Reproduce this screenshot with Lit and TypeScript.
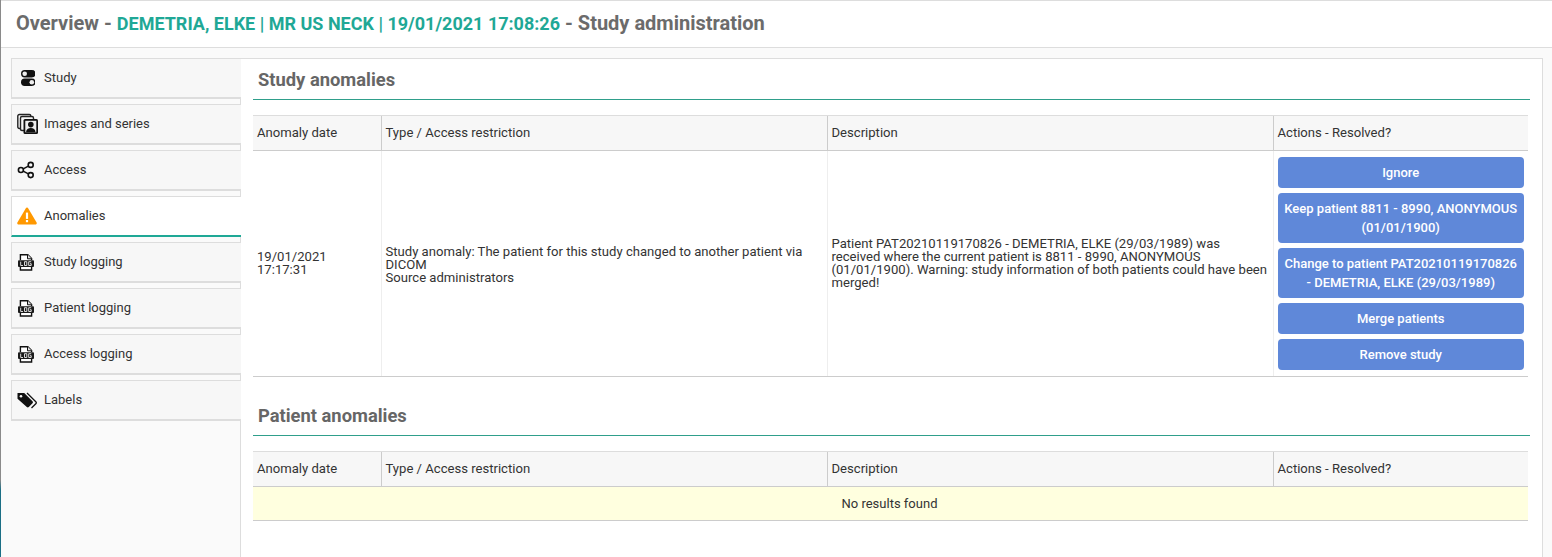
import { LitElement, html, css, svg } from "lit";
import { customElement } from "lit/decorators.js";

const logIcon = svg`<svg viewBox="0 0 16 18" width="16" height="18"><path d="M2.400 7V1.700h7.400l3.800 3.800V7 M2.400 14v3h11.200v-3" fill="#fff" stroke="#111" stroke-width="1.400"/><path d="M9.500 1.500v4.300h4.300" fill="#ddd" stroke="#111" stroke-width="1"/><rect x="0" y="7.200" width="16" height="6.800" rx="1" fill="#1a1a1a"/><path d="M2.700 8.700v3.800h2.300 M6.500 8.700h2.300v3.800H6.500z M13.200 8.700h-2.500v3.800h2.500v-1.800h-1.200" fill="none" stroke="#eee" stroke-width=".9"/></svg>`;

const icons: Record<string, unknown> = {
  study: svg`<svg viewBox="0 0 18 18" width="18" height="18"><rect x="4" y="1" width="14.500" height="7.400" rx="3.700" fill="#111"/><circle cx="7.700" cy="4.700" r="2.300" fill="#eee"/><rect x="4" y="9.600" width="14.500" height="7.400" rx="3.700" fill="#111"/><circle cx="14.800" cy="13.300" r="2.300" fill="#eee"/></svg>`,
  images: svg`<svg viewBox="0 0 22 22" width="22" height="22"><rect x=".8" y="1.500" width="13" height="14" rx="1.500" fill="#f7f7f7" stroke="#222" stroke-width="1.400"/><rect x="3.500" y="3.500" width="13" height="14" rx="1.500" fill="#f7f7f7" stroke="#222" stroke-width="1.400"/><rect x="6.500" y="6" width="14.500" height="15" rx="1.500" fill="#111"/><rect x="8.300" y="7.800" width="11" height="11.500" fill="#eee"/><circle cx="13.800" cy="11.600" r="2.800" fill="#111"/><path d="M9 19.300c.3-3 2.200-4.200 4.800-4.200s4.500 1.200 4.800 4.200z" fill="#111"/></svg>`,
  access: svg`<svg viewBox="0 0 18 18" width="18" height="18" fill="none" stroke="#111" stroke-width="1.600"><circle cx="3.900" cy="9" r="2.500"/><circle cx="13.700" cy="3.900" r="2.500"/><circle cx="13.700" cy="14.100" r="2.500"/><path d="M6.200 7.900l5.200-2.800M6.200 10.100l5.200 2.800"/></svg>`,
  warn: svg`<svg viewBox="0 0 20 18" width="20" height="18"><path d="M10 .6c.6 0 1 .3 1.300.8l8.300 14.200c.5.900-.1 1.900-1.100 1.900H1.500c-1 0-1.600-1-1.100-1.900L8.700 1.400C9 .9 9.400.6 10 .6z" fill="#ff9800"/><rect x="8.900" y="5.600" width="2.200" height="6.300" fill="#fff"/><rect x="8.900" y="13" width="2.200" height="2.200" fill="#fff"/></svg>`,
  log: logIcon,
  labels: svg`<svg viewBox="0 0 20 18" width="20" height="18"><path d="M.5 2h6.700l8.300 8.300c.6.6.6 1.400 0 2l-3.700 3.700c-.6.600-1.400.600-2 0L.5 7.700z" fill="#111"/><circle cx="4" cy="5.300" r="1.300" fill="#f7f7f7"/><path d="M10 2l8.800 8.800c.6.600.6 1.400 0 2l-4.300 4.200" fill="none" stroke="#111" stroke-width="1.300"/></svg>`,
};

const tabs = [
  { label: "Study", icon: "study" },
  { label: "Images and series", icon: "images" },
  { label: "Access", icon: "access" },
  { label: "Anomalies", icon: "warn", active: true },
  { label: "Study logging", icon: "log" },
  { label: "Patient logging", icon: "log" },
  { label: "Access logging", icon: "log" },
  { label: "Labels", icon: "labels" },
];

const actions = [
  "Ignore",
  "Keep patient 8811 - 8990, ANONYMOUS (01/01/1900)",
  "Change to patient PAT20210119170826 - DEMETRIA, ELKE (29/03/1989)",
  "Merge patients",
  "Remove study",
];

@customElement("app-root")
export class AppRoot extends LitElement {
  static styles = css`
    :host {
      display: block;
      height: 557px;
      overflow: hidden;
      font-family: Roboto, "Liberation Sans", sans-serif;
      font-size: 13px;
      color: #333;
    }
    .frame {
      height: 557px;
      padding-left: 1px;
      display: flex;
      flex-direction: column;
      box-sizing: border-box;
      background: linear-gradient(#8a8a8a 0 480px, #1a6e85 490px);
    }
    .header {
      height: 44px;
      padding-bottom: 2px;
      flex: none;
      background: #fff;
      border-top: 1px solid #ddd;
      border-bottom: 1px solid #ddd;
      display: flex;
      align-items: center;
      padding-left: 15px;
      font-size: 20px;
      font-weight: 700;
      color: #6b6b6b;
      white-space: pre;
    }
    .header b { color: #1fa896; font-weight: 700; font-size: 18px; }
    .body { flex: 1; display: flex; min-height: 0; background: #fafafa; }
    .side {
      width: 239px;
      flex: none;
      box-sizing: border-box;
      padding: 10px 0 0 10px;
      display: flex;
      flex-direction: column;
      gap: 5px;
    }
    .tab {
      height: 41px;
      box-sizing: border-box;
      display: flex;
      align-items: center;
      background: #f7f7f7;
      border: 1px solid #ddd;
      border-bottom-width: 2px;
      border-right: none;
      padding-bottom: 1px;
      white-space: nowrap;
      margin-right: -1px;
      position: relative;
      z-index: 1;
    }
    .tab.active { background: #fff; border-bottom-color: #1fa896; }
    .ico { width: 32px; flex: none; display: flex; box-sizing: border-box; padding-left: 5px; }
    .ico.log { padding-left: 6px; }
    .main {
      flex: 1;
      box-sizing: border-box;
      margin: 10px 9px 0 0;
      background: #fff;
      border: 1px solid #ddd;
      border-bottom: none;
      padding: 0 12px;
    }
    h2 {
      margin: 0;
      height: 41px;
      box-sizing: border-box;
      border-bottom: 1px solid #2f9f8b;
      font-size: 18.35px;
      font-weight: 700;
      color: #666;
      line-height: 42px;
      padding-left: 5px;
    }
    .spaced { margin-top: 18px; }
    table {
      width: 1275px;
      border-collapse: collapse;
      table-layout: fixed;
      margin-top: 15px;
    }
    th {
      height: 35px;
      padding: 0 4px 2px;
      box-sizing: border-box;
      background: #f7f7f7;
      font-size: 13.1px;
      font-weight: 400;
      text-align: left;
      border-top: 1px solid #ddd;
      border-bottom: 1px solid #ccc;
      border-left: 1px solid #ccc;
    }
    th:first-child, td:first-child { border-left: none; }
    td {
      padding: 4px;
      line-height: 13px;
      font-size: 13.1px;
      border-bottom: 1px solid #ccc;
      border-left: 1px solid #eee;
      vertical-align: middle;
    }
    td.up { padding-bottom: 6px; }
    td.down { padding-top: 6px; }
    td.empty {
      background: #ffffdf;
      text-align: center;
      height: 34px;
      box-sizing: border-box;
      border-left: none;
      font-size: 13px;
      padding-right: 6px;
    }
    .btns { display: flex; flex-direction: column; gap: 5px; padding: 2px 0; }
    .btn {
      background: #5f88d9;
      color: #fff;
      border-radius: 4px;
      text-align: center;
      font-size: 13px;
      font-weight: 500;
      line-height: 19px;
      padding: 6px;
    }
    .c1 { width: 128px; }
    .c2 { width: 446px; }
    .c3 { width: 446px; }
    .c4 { width: 255px; }
  `;

  private head() {
    return html`<colgroup><col class="c1" /><col class="c2" /><col class="c3" /><col class="c4" /></colgroup>
      <tr>
        <th>Anomaly date</th>
        <th>Type / Access restriction</th>
        <th>Description</th>
        <th>Actions - Resolved?</th>
      </tr>`;
  }

  render() {
    return html`<div class="frame">
      <div class="header">Overview - <b>DEMETRIA, ELKE | MR US NECK | 19/01/2021 17:08:26</b> - Study administration</div>
      <div class="body">
        <div class="side">
          ${tabs.map(
            (t) => html`<div class="tab ${t.active ? "active" : ""}">
              <span class="ico ${t.icon}">${icons[t.icon]}</span>${t.label}
            </div>`
          )}
        </div>
        <div class="main">
          <h2>Study anomalies</h2>
          <table>
            ${this.head()}
            <tr>
              <td class="up">19/01/2021 17:17:31</td>
              <td class="down">Study anomaly: The patient for this study changed to another patient via DICOM<br />Source administrators</td>
              <td class="up">Patient PAT20210119170826 - DEMETRIA, ELKE (29/03/1989) was received where the current patient is 8811 - 8990, ANONYMOUS (01/01/1900). Warning: study information of both patients could have been merged!</td>
              <td>
                <div class="btns">${actions.map((a) => html`<div class="btn">${a}</div>`)}</div>
              </td>
            </tr>
          </table>
          <h2 class="spaced">Patient anomalies</h2>
          <table>
            ${this.head()}
            <tr><td class="empty" colspan="4">No results found</td></tr>
          </table>
        </div>
      </div>
    </div>`;
  }
}
